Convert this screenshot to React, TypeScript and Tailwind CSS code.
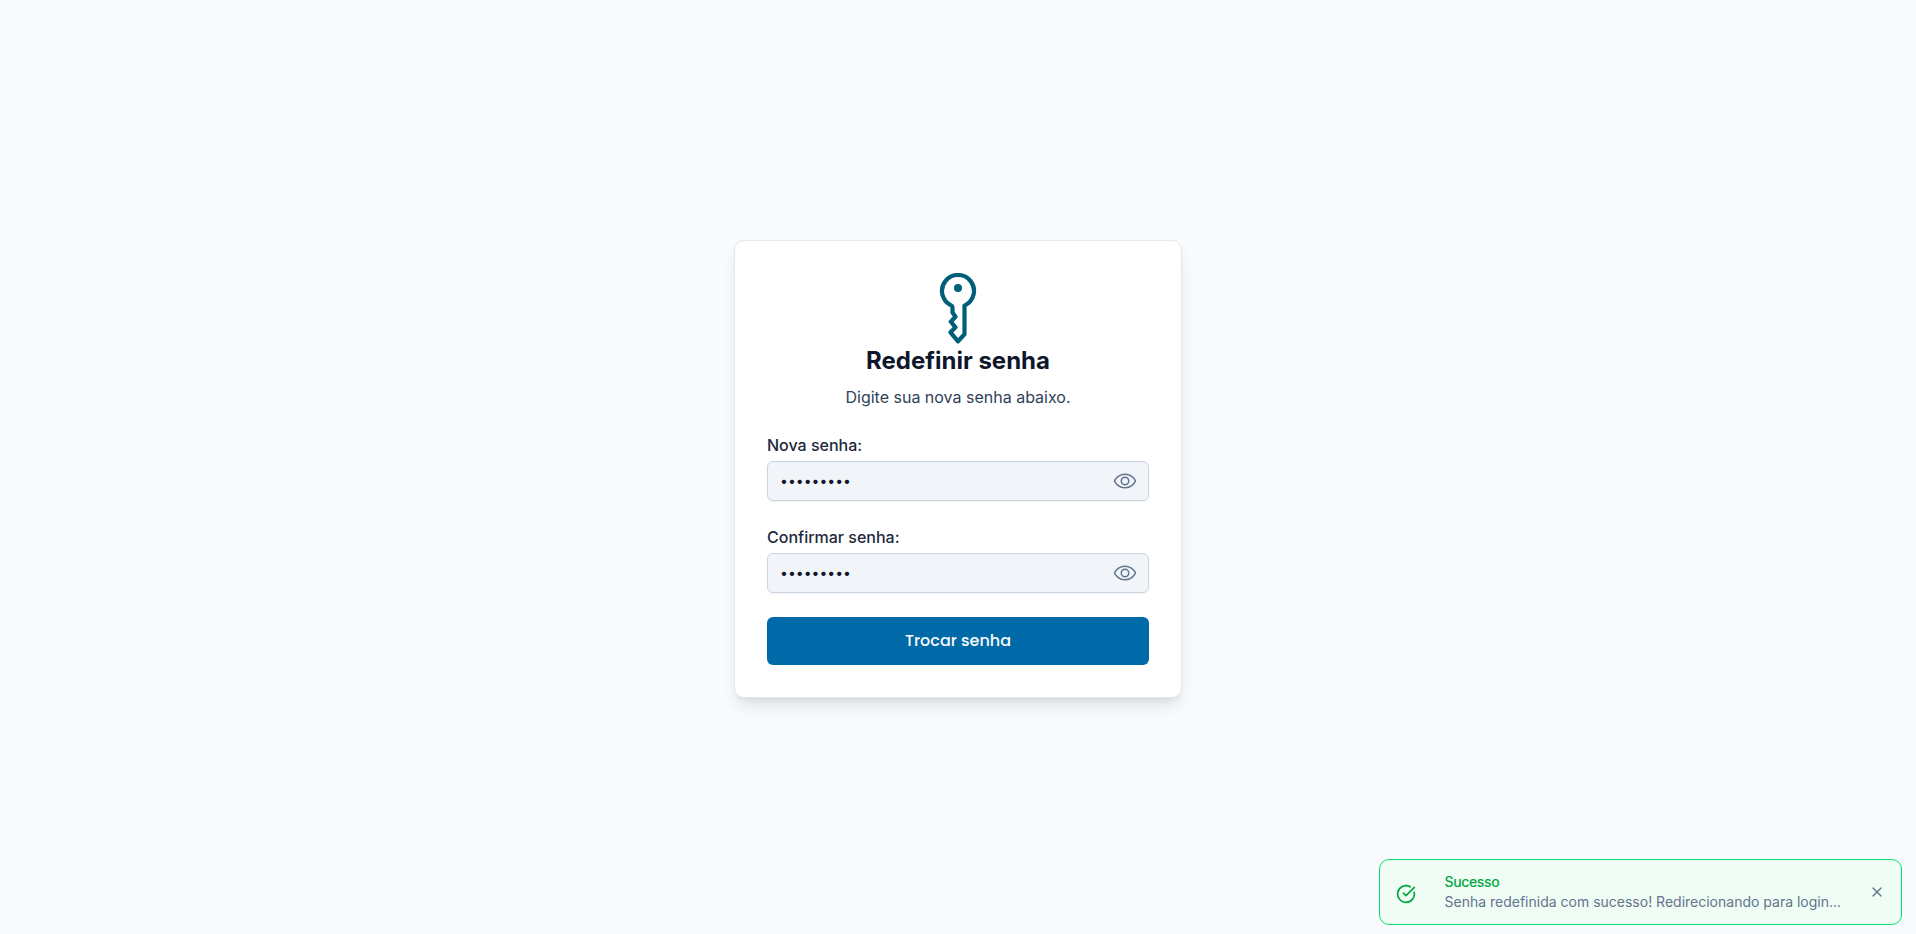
import { useState } from "react";
import { CircleCheckBig, X } from "lucide-react";
import { PiEye } from "react-icons/pi";

function KeyIcon() {
  return (
    <svg viewBox="0 0 72 72" className="h-[72px] w-[72px] text-[#005f78]" fill="none" stroke="currentColor" strokeWidth="4.2" strokeLinecap="round" strokeLinejoin="round">
      <path d="M42.5 32.600a16 16 0 1 0-13 0q1 .5 1 1.900v5l3 4.200-4.700 5 4.700 5.600-5 5L36 68.300l6.500-7z" />
      <circle cx="36" cy="15" r="4" fill="currentColor" stroke="none" />
    </svg>
  );
}

function PasswordField({ id, label }: { id: string; label: string }) {
  const [value, setValue] = useState("Senha@123");
  const [visible, setVisible] = useState(false);
  return (
    <div className="flex flex-col gap-1">
      <label htmlFor={id} className="text-base font-medium text-slate-800">
        {label}
      </label>
      <div className="flex h-10 items-center rounded-md border border-slate-300 bg-slate-100 pr-[11px] pl-3 shadow-xs">
        <input
          id={id}
          type={visible ? "text" : "password"}
          value={value}
          onChange={(e) => setValue(e.target.value)}
          className="min-w-0 flex-1 bg-transparent text-sm text-slate-900 outline-none"
        />
        <button type="button" onClick={() => setVisible(!visible)} className="text-slate-500">
          <PiEye className="size-6" />
        </button>
      </div>
    </div>
  );
}

export default function App() {
  return (
    <main className="flex h-[934px] w-full flex-col items-center justify-center bg-slate-50 pt-1 font-['Inter',sans-serif]">
      <section className="flex w-md flex-col items-center rounded-[10px] border border-slate-200 bg-white p-8 shadow-lg">
        <KeyIcon />
        <h1 className="text-2xl leading-8 font-bold text-slate-900">Redefinir senha</h1>
        <p className="mt-2 text-base text-slate-700">Digite sua nova senha abaixo.</p>
        <form className="mt-6 flex w-full flex-col gap-6" onSubmit={(e) => e.preventDefault()}>
          <PasswordField id="new" label="Nova senha:" />
          <PasswordField id="confirm" label="Confirmar senha:" />
          <button type="submit" className="h-12 rounded-md bg-[#0069a8] font-['Poppins','Inter',sans-serif] text-base font-medium text-slate-50">
            Trocar senha
          </button>
        </form>
      </section>

      <aside className="fixed right-[14px] bottom-[9px] flex h-[66px] w-[523px] items-center rounded-[10px] border border-green-400 bg-green-50 px-4">
        <CircleCheckBig className="mt-1 size-5 text-green-600" strokeWidth={2} />
        <div className="ml-[28.5px] flex-1 text-sm leading-5">
          <p className="font-medium tracking-tight text-green-600">Sucesso</p>
          <p className="text-slate-500">Senha redefinida com sucesso! Redirecionando para login...</p>
        </div>
        <X className="size-4 text-slate-500" />
      </aside>
    </main>
  );
}
